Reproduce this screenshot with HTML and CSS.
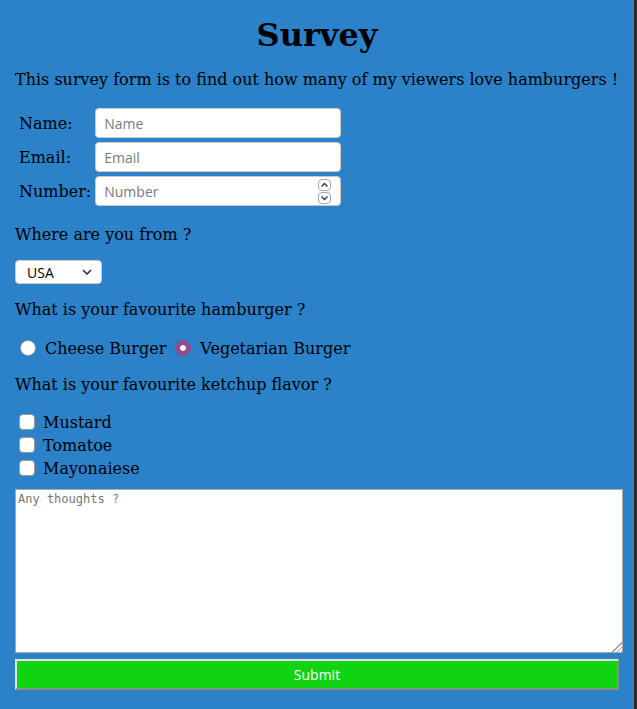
FILE: index.html
```html
<!DOCTYPE html>
<html lang="en">
<head>
<meta charset="utf-8">
<title>Survey</title>
<link rel="stylesheet" href="styles.css">
</head>
<body>
<main class="page">
  <h1 class="title">Survey</h1>
  <p class="intro">This survey form is to find out how many of my viewers love hamburgers !</p>
  <form class="survey">
    <table class="fields">
      <tr>
        <td class="field-label">Name:</td>
        <td><input class="text-input" type="text" placeholder="Name"></td>
      </tr>
      <tr>
        <td class="field-label">Email:</td>
        <td><input class="text-input" type="email" placeholder="Email"></td>
      </tr>
      <tr>
        <td class="field-label">Number:</td>
        <td>
          <div class="number-box">
            <input class="number-input" type="text" placeholder="Number">
            <div class="spinner">
              <span class="spin-btn"><svg width="9" height="6" viewBox="0 0 9 6"><path d="M1.5 4.5 L4.5 1.5 L7.5 4.5" fill="none" stroke="#333" stroke-width="1.3"/></svg></span>
              <span class="spin-btn"><svg width="9" height="6" viewBox="0 0 9 6"><path d="M1.5 1.5 L4.5 4.5 L7.5 1.5" fill="none" stroke="#333" stroke-width="1.3"/></svg></span>
            </div>
          </div>
        </td>
      </tr>
    </table>

    <p class="question">Where are you from ?</p>
    <div class="select-box">
      <select class="country">
        <option>USA</option>
      </select>
      <svg class="chevron" width="10" height="6" viewBox="0 0 10 6"><path d="M1 1 L5 5 L9 1" fill="none" stroke="#333" stroke-width="1.6"/></svg>
    </div>

    <p class="question">What is your favourite hamburger ?</p>
    <div class="radios">
      <label class="choice"><input class="radio" type="radio" name="burger"><span>Cheese Burger</span></label>
      <label class="choice"><input class="radio" type="radio" name="burger" checked><span>Vegetarian Burger</span></label>
    </div>

    <p class="question">What is your favourite ketchup flavor ?</p>
    <div class="checks">
      <label class="check-row"><input class="checkbox" type="checkbox"><span>Mustard</span></label>
      <label class="check-row"><input class="checkbox" type="checkbox"><span>Tomatoe</span></label>
      <label class="check-row"><input class="checkbox" type="checkbox"><span>Mayonaiese</span></label>
    </div>

    <textarea class="thoughts" placeholder="Any thoughts ?"></textarea>
    <button class="submit" type="button">Submit</button>
  </form>
</main>
</body>
</html>
```
FILE: styles.css
```css
html {
  background: #2b2b2b;
}

body {
  margin: 0;
  width: 634px;
  min-height: 709px;
  background: #2b82c9;
  color: #000;
  font-family: "DejaVu Serif", serif;
  font-size: 16px;
}

.page {
  padding: 16px 15px 0;
}

.title {
  margin: 0 0 16px;
  font-size: 32px;
  font-weight: bold;
  text-align: center;
}

.intro {
  margin: 0 0 16px;
}

.fields {
  border-spacing: 2px;
  margin: 0 0 0 1px;
}

.fields td {
  padding: 1px;
  vertical-align: middle;
}

.field-label {
  font-size: 16px;
}

.text-input,
.number-box {
  box-sizing: border-box;
  width: 246px;
  height: 30px;
  border: 1px solid #c9c9c9;
  border-radius: 4px;
  background: #fff;
}

.text-input {
  display: block;
  margin: 0;
  padding: 0 8px;
  font-family: "Open Sans", "Noto Sans", sans-serif;
  font-size: 14px;
  color: #222;
  outline: none;
}

.text-input::placeholder,
.number-input::placeholder {
  color: #7a7a7a;
}

.number-box {
  display: flex;
  align-items: center;
  padding: 0 8px;
}

.number-input {
  flex: 1;
  min-width: 0;
  border: 0;
  padding: 0;
  margin: 0;
  font-family: "Open Sans", "Noto Sans", sans-serif;
  font-size: 14px;
  background: transparent;
  outline: none;
}

.spinner {
  display: flex;
  flex-direction: column;
  gap: 1px;
  margin-right: 1px;
}

.spin-btn {
  box-sizing: border-box;
  width: 13px;
  height: 12px;
  border: 1px solid #a8a8a8;
  border-radius: 4px;
  display: flex;
  align-items: center;
  justify-content: center;
  background: #fff;
}

.question {
  margin: 16px 0;
}

.select-box {
  display: flex;
  align-items: center;
  width: 87px;
}

.country {
  appearance: none;
  -webkit-appearance: none;
  box-sizing: border-box;
  width: 87px;
  height: 24px;
  margin: 0;
  padding: 0 0 0 11px;
  border: 1px solid #c9c9c9;
  border-radius: 4px;
  background: #fff;
  color: #000;
  font-family: "Open Sans", "Noto Sans", sans-serif;
  font-size: 14px;
}

.chevron {
  margin-left: -20px;
  pointer-events: none;
}

.radios {
  display: flex;
  align-items: center;
  gap: 4px;
  height: 22px;
  padding-top: 2px;
}

.choice {
  display: flex;
  align-items: center;
  font-size: 16px;
}

.radio {
  appearance: none;
  -webkit-appearance: none;
  box-sizing: border-box;
  width: 16px;
  height: 16px;
  margin: 0 9px 0 5px;
  border: 1px solid #9a9a9a;
  border-radius: 50%;
  background: #fff;
}

.radio:checked {
  border-color: #8e4c91;
  background: radial-gradient(circle, #fff 0 2.5px, #8e4c91 3.2px);
}

.checks {
  margin-top: 0;
}

.check-row {
  display: flex;
  align-items: center;
  height: 23px;
  font-size: 16px;
}

.check-row span {
  padding-top: 2px;
}

.checkbox {
  appearance: none;
  -webkit-appearance: none;
  box-sizing: border-box;
  width: 16px;
  height: 16px;
  margin: 0 8px 0 4px;
  border: 1px solid #9a9a9a;
  border-radius: 4px;
  background: #fff;
}

.thoughts {
  display: block;
  box-sizing: border-box;
  width: 608px;
  height: 164px;
  margin: 10px 0 0;
  padding: 2px;
  border: 1px solid #a9a9a9;
  background: #fff;
  font-family: "DejaVu Sans Mono", monospace;
  font-size: 12px;
}

.thoughts::placeholder {
  color: #777;
}

.thoughts::-webkit-resizer {
  background:
    linear-gradient(135deg, #fff 55%, transparent 55%),
    repeating-linear-gradient(135deg, #fff 0 2px, #9c9c9c 2px 3px);
}

.submit {
  display: block;
  box-sizing: border-box;
  width: 604px;
  height: 31px;
  margin: 6px 0 0;
  border: 2px solid;
  border-color: #e3e3e3 #8d8d8d #8d8d8d #e3e3e3;
  background: #12d312;
  color: #fff;
  font-family: "Open Sans", "Noto Sans", sans-serif;
  font-size: 14px;
}
```
